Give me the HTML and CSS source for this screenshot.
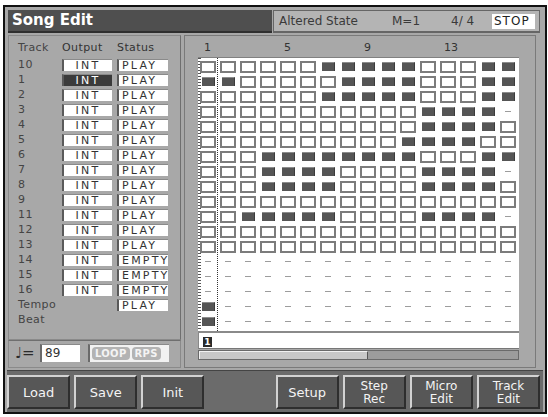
FILE: index.html
```html
<!DOCTYPE html>
<html lang="en">
<head>
  <meta charset="UTF-8" />
  <title>Song Edit</title>
  <link rel="stylesheet" href="styles.css">
</head>
<body>
  <div class="screen">
    <div class="topbar">
      <div class="title">Song Edit</div>
      <div class="info">
        <span class="song">Altered State</span>
        <span class="meas">M=1</span>
        <span class="beat">4/ 4</span>
        <span class="stop">STOP</span>
      </div>
    </div>

    <div class="main">
      <div class="left">
        <div class="tracks">
          <div class="thead">
            <span class="tname">Track</span>
            <span class="tout">Output</span>
            <span>Status</span>
          </div>
          <div class="trow"><span class="tname">10</span><span class="box out">INT</span><span class="box st">PLAY</span></div>
          <div class="trow"><span class="tname">1</span><span class="box out sel">INT</span><span class="box st">PLAY</span></div>
          <div class="trow"><span class="tname">2</span><span class="box out">INT</span><span class="box st">PLAY</span></div>
          <div class="trow"><span class="tname">3</span><span class="box out">INT</span><span class="box st">PLAY</span></div>
          <div class="trow"><span class="tname">4</span><span class="box out">INT</span><span class="box st">PLAY</span></div>
          <div class="trow"><span class="tname">5</span><span class="box out">INT</span><span class="box st">PLAY</span></div>
          <div class="trow"><span class="tname">6</span><span class="box out">INT</span><span class="box st">PLAY</span></div>
          <div class="trow"><span class="tname">7</span><span class="box out">INT</span><span class="box st">PLAY</span></div>
          <div class="trow"><span class="tname">8</span><span class="box out">INT</span><span class="box st">PLAY</span></div>
          <div class="trow"><span class="tname">9</span><span class="box out">INT</span><span class="box st">PLAY</span></div>
          <div class="trow"><span class="tname">11</span><span class="box out">INT</span><span class="box st">PLAY</span></div>
          <div class="trow"><span class="tname">12</span><span class="box out">INT</span><span class="box st">PLAY</span></div>
          <div class="trow"><span class="tname">13</span><span class="box out">INT</span><span class="box st">PLAY</span></div>
          <div class="trow"><span class="tname">14</span><span class="box out">INT</span><span class="box st">EMPTY</span></div>
          <div class="trow"><span class="tname">15</span><span class="box out">INT</span><span class="box st">EMPTY</span></div>
          <div class="trow"><span class="tname">16</span><span class="box out">INT</span><span class="box st">EMPTY</span></div>
          <div class="trow"><span class="tname">Tempo</span><span class="blank"></span><span class="box st">PLAY</span></div>
          <div class="trow"><span class="tname">Beat</span></div>
        </div>
        <div class="tempo">
          <span class="note">&#9833;=</span>
          <span class="bpm">89</span>
          <span class="modes"><b>LOOP</b><b>RPS</b></span>
        </div>
      </div>

      <div class="right">
        <div class="marks">
          <span>1</span><span>5</span><span>9</span><span>13</span>
        </div>
        <div class="grid" id="grid"></div>
        <div class="pos"><span class="cur">1</span></div>
        <div class="scroll"><div class="thumb"></div></div>
      </div>
    </div>

    <div class="buttons">
      <button type="button">Load</button>
      <button type="button">Save</button>
      <button type="button">Init</button>
      <div class="slot"></div>
      <button type="button">Setup</button>
      <button type="button" class="two">Step<br>Rec</button>
      <button type="button" class="two">Micro<br>Edit</button>
      <button type="button" class="two">Track<br>Edit</button>
    </div>
  </div>

<script>
  // F = recorded pattern, E = empty measure, - = no data
  const rows = [
    'EEEEEEFFFFFEEEFF',
    'FFEEEEEFFFFEEEFF',
    'EEEEEEFFFFFEEEFF',
    'EEEEEEEEEEEFFFF-',
    'EEEEEEEEEEEFFFFE',
    'EEEEEEEEEEFFFFEE',
    'EEEFFFFFFFFEEEFF',
    'EEEFFFFEEEEFFFF-',
    'EEEFFFFEEEEFFFFE',
    'EEEEEEEEEEEEEEEE',
    'EEFFFFFEEEEFFFF-',
    'EEEEEEEEEEEEEEEE',
    'EEEEEEEEEEEEEEEE',
    '----------------',
    '----------------',
    '----------------',
    'F---------------',
    'F---------------'
  ];

  const grid = document.getElementById('grid');
  rows.forEach(function (row) {
    for (const c of row) {
      const cell = document.createElement('span');
      cell.className = 'cell ' + (c === 'F' ? 'on' : c === 'E' ? 'off' : 'none');
      grid.appendChild(cell);
    }
  });
</script>
</body>
</html>
```

FILE: styles.css
```css
* {
  box-sizing: border-box;
}

body {
  margin: 0;
  background: #fff;
  font-family: "DejaVu Sans", sans-serif;
  color: #333;
}

.screen {
  width: 544px;
  height: 409px;
  margin: 5px 0 0 3px;
  border: 2px solid #111;
  background: #a8a8a8;
  padding: 3px 5px 0 3px;
  display: flex;
  flex-direction: column;
  gap: 2px;
}

/* top bar */
.topbar {
  display: flex;
  height: 23px;
  gap: 1px;
}

.title {
  width: 264px;
  background: #4f4f4f;
  border-bottom: 2px solid #2f2f2f;
  color: #fff;
  font-weight: bold;
  font-size: 15px;
  line-height: 21px;
  padding-left: 4px;
}

.info {
  flex: 1;
  display: flex;
  align-items: center;
  background: #b4b4b4;
  border: 1px solid #666;
  border-bottom-width: 2px;
  font-size: 12px;
  color: #3a3a3a;
  padding-left: 5px;
}

.song {
  width: 113px;
}

.meas {
  width: 59px;
}

.beat {
  width: 41px;
}

.stop {
  width: 43px;
  height: 15px;
  background: #fff;
  color: #222;
  line-height: 15px;
  letter-spacing: 1px;
  padding-left: 2px;
}

/* main area */
.main {
  display: flex;
  gap: 3px;
  height: 333px;
}

.left {
  width: 173px;
  display: flex;
  flex-direction: column;
}

.tracks {
  height: 305px;
  border: 1px solid #8a8a8a;
  border-right-color: #6f6f6f;
  padding: 5px 0 0 9px;
  font-size: 11px;
}

.thead {
  display: flex;
  height: 14px;
  line-height: 14px;
  margin-bottom: 2px;
  letter-spacing: 0.4px;
}

.tname {
  width: 44px;
  color: #444;
  letter-spacing: 0.4px;
}

.tout {
  width: 55px;
}

.trow {
  display: flex;
  align-items: center;
  height: 15px;
}

.box {
  height: 12px;
  background: #fff;
  border-left: 2px solid #5a5a5a;
  border-top: 1px solid #8a8a8a;
  font-size: 11px;
  line-height: 11px;
  letter-spacing: 2.2px;
  color: #333;
}

.out {
  width: 50px;
  text-align: center;
  margin-right: 5px;
}

.out.sel {
  background: #3b3b3b;
  color: #fff;
}

.blank {
  width: 55px;
}

.st {
  width: 51px;
  padding-left: 3px;
}

.tempo {
  flex: 1;
  display: flex;
  align-items: center;
  border: 1px solid #8a8a8a;
  border-top-color: #6f6f6f;
  padding: 0 0 2px 6px;
  font-size: 12px;
}

.note {
  width: 25px;
  font-size: 15px;
  color: #2a2a2a;
}

.bpm {
  width: 40px;
  height: 18px;
  background: #fff;
  border-left: 2px solid #6a6a6a;
  border-top: 1px solid #8a8a8a;
  padding-left: 3px;
  line-height: 17px;
  margin-right: 8px;
}

.modes {
  width: 81px;
  height: 18px;
  display: flex;
  align-items: center;
  gap: 2px;
  background: #f2f2f2;
  border-left: 2px solid #6a6a6a;
  border-top: 1px solid #8a8a8a;
  padding-left: 2px;
}

.modes b {
  background: #b3b3b3;
  color: #f4f4f4;
  font-size: 10px;
  line-height: 13px;
  border-radius: 4px;
  padding: 0 3px;
  letter-spacing: 0.3px;
}

/* pattern grid */
.right {
  flex: 1;
  margin-right: 4px;
  border: 1px solid #7a7a7a;
  padding: 4px 0 0 13px;
}

.marks {
  display: flex;
  height: 17px;
  font-size: 11px;
  line-height: 15px;
}

.marks span {
  width: 80px;
  padding-left: 6px;
}

.grid {
  width: 321px;
  display: grid;
  grid-template-columns: repeat(16, 20px);
  grid-auto-rows: 15px;
  padding: 1px 0 2px;
  border-top: 1px solid #808080;
  border-bottom: 2px solid #8a8a8a;
  background:
    repeating-linear-gradient(to bottom, #333 0 1px, transparent 1px 2px) 19px 0 / 1px 100% no-repeat,
    repeating-linear-gradient(to bottom, #555 0 1px, transparent 1px 3px) 0 0 / 3px 100% no-repeat,
    #fff;
}

.cell {
  display: flex;
  align-items: center;
  justify-content: center;
}

.cell::after {
  content: "";
  display: block;
}

.off::after {
  width: 12px;
  height: 8px;
  border: 2px solid #7c7c7c;
}

.on::after {
  width: 12px;
  height: 8px;
  background: #555;
  border-top: 1px solid #8c8c8c;
  border-right: 1px solid #3c3c3c;
}

.none::after {
  width: 6px;
  height: 1px;
  background: #9c9c9c;
}

.pos {
  width: 321px;
  height: 16px;
  background: #fff;
  border-left: 1px solid #888;
  border-bottom: 1px solid #777;
  padding: 4px 0 0 4px;
}

.cur {
  display: block;
  width: 9px;
  height: 10px;
  background: #2a2a2a;
  color: #fff;
  font-size: 9px;
  font-weight: bold;
  line-height: 10px;
  text-align: center;
}

.scroll {
  width: 321px;
  height: 10px;
  margin-top: 1px;
  background: #9c9c9c;
  border: 1px solid #6a6a6a;
}

.thumb {
  width: 169px;
  height: 100%;
  background: #c8c8c8;
  border-top: 1px solid #f2f2f2;
  border-left: 1px solid #f2f2f2;
  border-right: 1px solid #555;
}

/* function buttons */
.buttons {
  flex: 1;
  display: grid;
  grid-template-columns: repeat(8, 1fr);
  gap: 4px;
  background: #6b6b6b;
  border-top: 1px solid #444;
  margin: 0 -3px 0 -1px;
  padding: 4px 3px 3px 0;
}

button {
  background: #575757;
  border: 2px solid;
  border-color: #d2d2d2 #2e2e2e #2e2e2e #d2d2d2;
  color: #f4f4f4;
  font-family: "DejaVu Sans", sans-serif;
  font-size: 13px;
  padding: 0;
  cursor: pointer;
}

button.two {
  font-size: 12px;
  line-height: 13px;
  padding-top: 1px;
}

button:hover {
  background: #636363;
}
```
